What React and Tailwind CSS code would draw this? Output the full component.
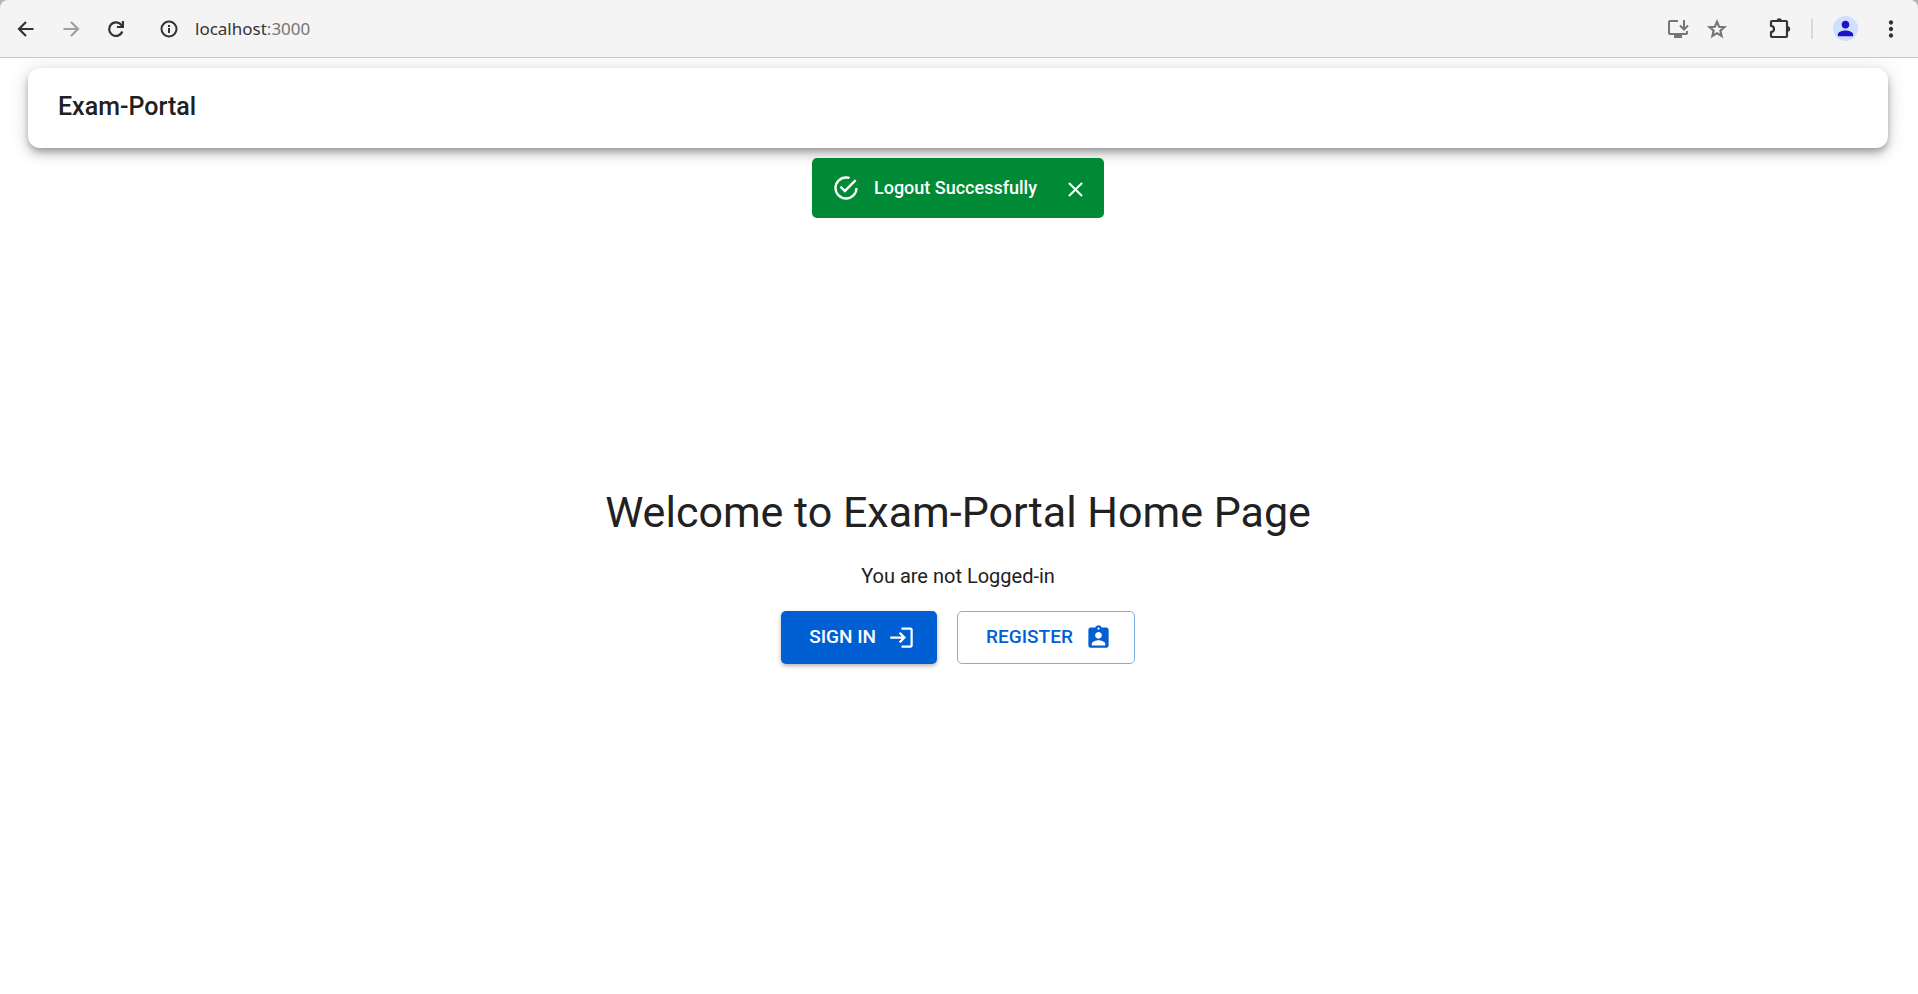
import { MdMoreVert, MdPerson, MdClose, MdLogin, MdAssignmentInd } from 'react-icons/md';

function ArrowIcon({ flipped }) {
  return (
    <svg
      width="24"
      height="24"
      viewBox="0 0 24 24"
      fill="none"
      stroke="currentColor"
      strokeWidth="2.2"
      aria-hidden="true"
      className={flipped ? '-scale-x-100' : ''}
    >
      <path d="M19.500 12H5.500M12 5l-7 7l7 7" />
    </svg>
  );
}

function ReloadIcon() {
  return (
    <svg width="24" height="24" viewBox="0 0 24 24" fill="none" stroke="currentColor" strokeWidth="2.2" aria-hidden="true">
      <path d="M18.300 14.500A6.800 6.800 0 1 1 17.600 8.400L18.800 10" />
      <path d="M18.900 4v6h-6" />
    </svg>
  );
}

function InfoIcon() {
  return (
    <svg width="20" height="20" viewBox="0 0 20 20" fill="none" stroke="currentColor" strokeWidth="2" aria-hidden="true">
      <circle cx="10" cy="10" r="7.5" />
      <path d="M10 9v5M10 6v2" />
    </svg>
  );
}

function StarIcon() {
  return (
    <svg width="24" height="24" viewBox="0 0 24 24" fill="none" stroke="currentColor" strokeWidth="2.1" aria-hidden="true">
      <path d="M12 4.700l2.100 5l5.400.45l-4.100 3.550l1.250 5.300L12 16.200l-4.650 2.800l1.250-5.300l-4.100-3.550l5.400-.45z" />
    </svg>
  );
}

function InstallIcon() {
  return (
    <svg width="22" height="20" viewBox="0 0 22 20" fill="none" stroke="currentColor" strokeWidth="2" aria-hidden="true">
      <path d="M11 2H3a1 1 0 0 0-1 1v11a1 1 0 0 0 1 1h16a1 1 0 0 0 1-1v-2" />
      <path d="M17 1v9M13 6.500l4 4l4-4" />
      <path d="M7 16h8v3H7z" fill="currentColor" stroke="none" />
    </svg>
  );
}

function ExtensionIcon() {
  return (
    <svg width="22" height="22" viewBox="0 0 22 22" aria-hidden="true">
      <path
        d="M3 3h14a1 1 0 0 1 1 1v14a1 1 0 0 1-1 1H3a1 1 0 0 1-1-1v-4a3 3 0 0 0 0-6V4a1 1 0 0 1 1-1z"
        fill="none"
        stroke="currentColor"
        strokeWidth="2.2"
        strokeLinejoin="round"
      />
      <path d="M7.500 3a2.700 2.700 0 0 1 5.400 0zM18.500 8.300a2.700 2.700 0 0 1 0 5.400z" fill="currentColor" />
    </svg>
  );
}

function SuccessIcon() {
  return (
    <svg width="28" height="28" viewBox="0 0 24 24" fill="currentColor" aria-hidden="true">
      <path d="M20,12A8,8 0 0,1 12,20A8,8 0 0,1 4,12A8,8 0 0,1 12,4C12.76,4 13.5,4.11 14.2,4.31L15.77,2.74C14.61,2.26 13.34,2 12,2A10,10 0 0,0 2,12A10,10 0 0,0 12,22A10,10 0 0,0 22,12M7.91,10.08L6.5,11.5L11,16L21,6L19.59,4.58L11,13.17L7.91,10.08Z" />
    </svg>
  );
}

function BrowserBar() {
  return (
    <div className="bg-[#b4b4b4]">
      <div className="flex h-[58px] items-center justify-between rounded-t-lg border-b border-[#c8c8c8] bg-[#f4f4f4] px-[14px] text-[#333333]">
        <div className="flex items-center">
          <div className="flex items-center gap-[21px]">
            <button type="button" aria-label="Back"><ArrowIcon /></button>
            <button type="button" aria-label="Forward" className="text-[#a0a0a0]"><ArrowIcon flipped /></button>
            <button type="button" aria-label="Reload"><ReloadIcon /></button>
          </div>
          <button type="button" aria-label="Site information" className="ml-[31px]"><InfoIcon /></button>
          <span className="ml-4 font-['Noto_Sans',sans-serif] text-[17px]">
            localhost<span className="text-[#757575]">:3000</span>
          </span>
        </div>
        <div className="flex items-center">
          <button type="button" aria-label="Install app" className="text-[#757575]"><InstallIcon /></button>
          <button type="button" aria-label="Bookmark this page" className="ml-4 text-[#757575]"><StarIcon /></button>
          <button type="button" aria-label="Extensions" className="ml-10"><ExtensionIcon /></button>
          <div className="ml-5 h-5 w-[2px] bg-[#d9d9d9]" />
          <button type="button" aria-label="Profile" className="ml-5 flex size-[25px] items-center justify-center rounded-full bg-[#cfe0ff] text-[#2010c8]">
            <MdPerson size={23} />
          </button>
          <button type="button" aria-label="Menu" className="ml-5"><MdMoreVert size={26} /></button>
        </div>
      </div>
    </div>
  );
}

export default function App() {
  return (
    <div className="flex min-h-screen flex-col bg-white font-[Roboto,sans-serif] text-[#212121]">
      <BrowserBar />
      <div className="flex flex-1 flex-col overflow-hidden pt-[10px] pr-[30px] pl-7">
        <header className="flex h-20 rounded-xl bg-white px-[30px] pt-5 shadow-[0_4px_6px_-1px_rgba(0,0,0,0.25),0_7px_12px_0_rgba(0,0,0,0.15),0_1px_22px_0_rgba(0,0,0,0.12)]">
          <h1 className="text-[25px] leading-[38px] font-medium">Exam-Portal</h1>
        </header>
        <div role="status" className="mt-[10px] flex h-[60px] items-center self-center rounded-[5px] bg-[#008a35] px-4 text-white">
          <span className="ml-1"><SuccessIcon /></span>
          <p className="ml-[14px] text-[18px] leading-6 font-medium">Logout Successfully</p>
          <button type="button" aria-label="Close" className="ml-[26px] pt-[2px]"><MdClose size={25} /></button>
        </div>
        <main className="flex flex-1 flex-col items-center pt-[268px]">
          <h2 className="text-[43px] leading-[52px]">Welcome to Exam-Portal Home Page</h2>
          <p className="mt-[23px] text-xl leading-[30px]">You are not Logged-in</p>
          <div className="mt-5 flex gap-5">
            <button type="button" className="flex h-[53px] items-center gap-3 rounded-[5px] bg-[#005fd3] pr-[22px] pl-7 text-[19px] font-medium text-white shadow-[0_2px_4px_0_rgba(0,0,0,0.3)]">
              SIGN IN <MdLogin size={27} />
            </button>
            <button type="button" className="flex h-[53px] items-center gap-3 rounded-[5px] border border-[#7fafe9] pr-[22px] pl-7 text-[19px] font-medium text-[#005fd3]">
              REGISTER <MdAssignmentInd size={27} />
            </button>
          </div>
        </main>
      </div>
    </div>
  );
}
